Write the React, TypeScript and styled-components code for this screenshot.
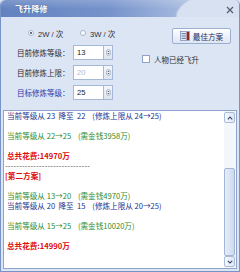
import React from "react";
import styled, { createGlobalStyle } from "styled-components";

const Global = createGlobalStyle`
  html, body { margin: 0; padding: 0; background: #dce5f3; }
  body {
    width: 240px; height: 272px; overflow: hidden;
    font-family: "Noto Sans CJK SC", "Liberation Sans", sans-serif;
  }
`;

const Window = styled.div`
  width: 240px;
  height: 272px;
  box-sizing: border-box;
  display: flex;
  flex-direction: column;
  background: #dce5f3;
  border: 1px solid #7893c8;
  border-top: none;
  border-radius: 5px 5px 0 0;
  overflow: hidden;
`;

const TitleBar = styled.div`
  height: 17px;
  flex: none;
  display: flex;
  align-items: center;
  justify-content: space-between;
  padding: 0 5px 0 14px;
  background:
    radial-gradient(ellipse 64px 28px at 100% 100%, #d7e1f1 96%, rgba(215,225,241,0) 100%),
    linear-gradient(180deg, rgba(255,255,255,0.18) 0%, rgba(255,255,255,0) 55%),
    linear-gradient(90deg, #6282c0 0%, #7592cb 45%, #a3b8de 75%, #c6d4ec 100%);
  border-radius: 5px 5px 0 0;
`;

const Title = styled.span`
  color: #ffffff;
  font-size: 8px;
  font-weight: bold;
  letter-spacing: 0.2px;
  text-shadow: 0 0 1px rgba(30, 50, 100, 0.6);
`;

const Close = styled.svg`
  width: 8px;
  height: 8px;
  margin-top: 2px;
`;

const Top = styled.div`
  flex: none;
  height: 93px;
  box-sizing: border-box;
  display: flex;
  padding: 9px 0 0 16px;
`;

const LeftCol = styled.div`
  display: flex;
  flex-direction: column;
  gap: 5px;
`;

const RadioRow = styled.div`
  height: 14px;
  display: flex;
  align-items: center;
  padding-left: 11px;
`;

const RadioItem = styled.label`
  width: 52px;
  display: flex;
  align-items: center;
  gap: 4px;
  font-size: 7.6px;
  color: #2a2f3c;
  font-family: "Liberation Sans", "Noto Sans CJK SC", sans-serif;
`;

const RadioDot = styled.span<{ $on?: boolean }>`
  width: 6px;
  height: 6px;
  box-sizing: border-box;
  border-radius: 50%;
  border: 1px solid #a9b6ca;
  background: #fbfcfe;
  display: flex;
  align-items: center;
  justify-content: center;
  &::after {
    content: "";
    width: 2px;
    height: 2px;
    border-radius: 50%;
    background: ${(p) => (p.$on ? "#3a3f4a" : "transparent")};
  }
`;

const FieldRow = styled.div`
  height: 15px;
  display: flex;
  align-items: center;
`;

const Label = styled.span<{ $blue?: boolean }>`
  width: 56px;
  font-size: 7.5px;
  white-space: nowrap;
  color: ${(p) => (p.$blue ? "#2b3aa8" : "#2a2d36")};
`;

const Input = styled.div<{ $disabled?: boolean }>`
  width: 30px;
  height: 15px;
  box-sizing: border-box;
  border: 1px solid #a6b8d6;
  border-right: none;
  background: #ffffff;
  display: flex;
  align-items: center;
  padding-left: 3px;
  font-size: 7.6px;
  font-family: "Liberation Sans", sans-serif;
  color: ${(p) => (p.$disabled ? "#b4b8c0" : "#222")};
`;

const Spin = styled.div`
  width: 10px;
  height: 15px;
  box-sizing: border-box;
  border: 1px solid #a6b8d6;
  background: linear-gradient(180deg, #f4f7fc 0%, #dbe4f2 100%);
  display: flex;
  align-items: center;
  justify-content: center;
`;

const RightCol = styled.div`
  display: flex;
  flex-direction: column;
  margin-left: 10px;
`;

const Button = styled.div`
  width: 59px;
  height: 16px;
  box-sizing: border-box;
  margin: 2px 0 0 30px;
  border: 1px solid #9cafd0;
  border-radius: 2px;
  background: linear-gradient(180deg, #ffffff 0%, #eef2f9 50%, #dfe7f4 100%);
  display: flex;
  align-items: center;
  justify-content: center;
  gap: 3px;
  font-size: 7.6px;
  color: #1f2d5e;
`;

const CheckRow = styled.label`
  margin-top: 11px;
  height: 8px;
  display: flex;
  align-items: center;
  gap: 4px;
  font-size: 7.5px;
  color: #2a2d36;
`;

const CheckBox = styled.span`
  width: 8px;
  height: 8px;
  box-sizing: border-box;
  border: 1px solid #8ea3c4;
  background: #ffffff;
`;

const Panel = styled.div`
  flex: 1;
  margin: 0 2px 2px 2px;
  border: 1px solid #8ea5cb;
  background: #ffffff;
  display: flex;
  min-height: 0;
  overflow: hidden;
`;

const Lines = styled.div`
  flex: 1;
  padding-left: 3px;
  display: flex;
  flex-direction: column;
`;

type Tone = "navy" | "green" | "red" | "dash" | "blank";

const toneColor: Record<Tone, string> = {
  navy: "#22308c",
  green: "#2f8a2a",
  red: "#e00b0b",
  dash: "#4a4a4a",
  blank: "#000",
};

const Line = styled.div<{ $tone: Tone; $shift?: boolean }>`
  height: 10px;
  line-height: 10px;
  font-size: 7.6px;
  white-space: pre;
  color: ${(p) => toneColor[p.$tone]};
  font-weight: ${(p) => (p.$tone === "red" ? "bold" : "normal")};
  margin-left: ${(p) => (p.$shift ? "-2px" : "0")};
  letter-spacing: ${(p) => (p.$tone === "dash" ? "0.2px" : "0")};
`;

const Scrollbar = styled.div`
  width: 12px;
  flex: none;
  box-sizing: border-box;
  padding: 1px 1px 1px 0;
  background: #f3f6fb;
  display: flex;
  flex-direction: column;
`;

const ArrowBtn = styled.div`
  height: 11px;
  flex: none;
  box-sizing: border-box;
  border: 1px solid #aabcdb;
  border-radius: 2px;
  background: linear-gradient(90deg, #f6f9fd 0%, #dfe7f4 100%);
  display: flex;
  align-items: center;
  justify-content: center;
`;

const TrackGap = styled.div`
  height: 45px;
  flex: none;
`;

const Thumb = styled.div`
  flex: 1;
  box-sizing: border-box;
  border: 1px solid #a3b6d6;
  border-radius: 2px;
  background: linear-gradient(90deg, #e6edf8 0%, #cdd9ee 100%);
`;

const lines: { t: Tone; s: string; shift?: boolean }[] = [
  { t: "navy", s: "当前等级从 23  降至  22    (修炼上限从 24→25)" },
  { t: "blank", s: " " },
  { t: "green", s: "当前等级从 22→25    (需金钱3958万)" },
  { t: "blank", s: " " },
  { t: "red", s: "总共花费:14970万" },
  { t: "dash", s: "------------------------------", shift: true },
  { t: "red", s: "[第二方案]", shift: true },
  { t: "blank", s: " " },
  { t: "green", s: "当前等级从 13→20    (需金钱4970万)" },
  { t: "navy", s: "当前等级从 20  降至  15    (修炼上限从 20→25)" },
  { t: "blank", s: " " },
  { t: "green", s: "当前等级从 15→25    (需金钱10020万)" },
  { t: "blank", s: " " },
  { t: "red", s: "总共花费:14990万" },
];

const SpinIcon = () => (
  <svg width="5" height="7" viewBox="0 0 5 7">
    <ellipse cx="2.5" cy="3.5" rx="2.2" ry="3.1" fill="#eef2f8" stroke="#8c98ad" strokeWidth="0.6" />
    <path d="M1.4 3 L2.5 1.7 L3.6 3 Z" fill="#4c5566" />
    <path d="M1.4 4 L2.5 5.3 L3.6 4 Z" fill="#4c5566" />
  </svg>
);

const PlanIcon = () => (
  <svg width="10" height="10" viewBox="0 0 10 10">
    <rect x="0.5" y="0.5" width="9" height="9" fill="#e9eef7" stroke="#7f92b6" strokeWidth="0.8" />
    <rect x="1.5" y="2" width="4.5" height="1.2" fill="#6f86b3" />
    <rect x="1.5" y="4.4" width="4.5" height="1.2" fill="#6f86b3" />
    <rect x="1.5" y="6.8" width="4.5" height="1.2" fill="#6f86b3" />
    <rect x="6.6" y="1" width="2.4" height="8" fill="#8a2a2a" />
  </svg>
);

const Chevron = ({ up }: { up?: boolean }) => (
  <svg width="6" height="4" viewBox="0 0 6 4">
    <path
      d={up ? "M0.8 3.3 L3 1 L5.2 3.3" : "M0.8 0.8 L3 3 L5.2 0.8"}
      fill="none"
      stroke="#3d4a60"
      strokeWidth="1.1"
    />
  </svg>
);

export default function App() {
  return (
    <>
      <Global />
      <Window>
        <TitleBar>
          <Title>飞升降修</Title>
          <Close viewBox="0 0 8 8">
            <path d="M1 1 L7 7 M7 1 L1 7" stroke="#545c6c" strokeWidth="1.2" />
          </Close>
        </TitleBar>
        <Top>
          <LeftCol>
            <RadioRow>
              <RadioItem>
                <RadioDot $on />
                2W / 次
              </RadioItem>
              <RadioItem>
                <RadioDot />
                3W / 次
              </RadioItem>
            </RadioRow>
            <FieldRow>
              <Label>目前修炼等级：</Label>
              <Input>13</Input>
              <Spin>
                <SpinIcon />
              </Spin>
            </FieldRow>
            <FieldRow>
              <Label>目前修炼上限：</Label>
              <Input $disabled>20</Input>
              <Spin>
                <SpinIcon />
              </Spin>
            </FieldRow>
            <FieldRow>
              <Label $blue>目标修炼等级：</Label>
              <Input>25</Input>
              <Spin>
                <SpinIcon />
              </Spin>
            </FieldRow>
          </LeftCol>
          <RightCol>
            <Button>
              <PlanIcon />
              最佳方案
            </Button>
            <CheckRow>
              <CheckBox />
              人物已经飞升
            </CheckRow>
          </RightCol>
        </Top>
        <Panel>
          <Lines>
            {lines.map((l, i) => (
              <Line key={i} $tone={l.t} $shift={l.shift}>
                {l.s}
              </Line>
            ))}
          </Lines>
          <Scrollbar>
            <ArrowBtn>
              <Chevron up />
            </ArrowBtn>
            <TrackGap />
            <Thumb />
            <ArrowBtn>
              <Chevron />
            </ArrowBtn>
          </Scrollbar>
        </Panel>
      </Window>
    </>
  );
}
